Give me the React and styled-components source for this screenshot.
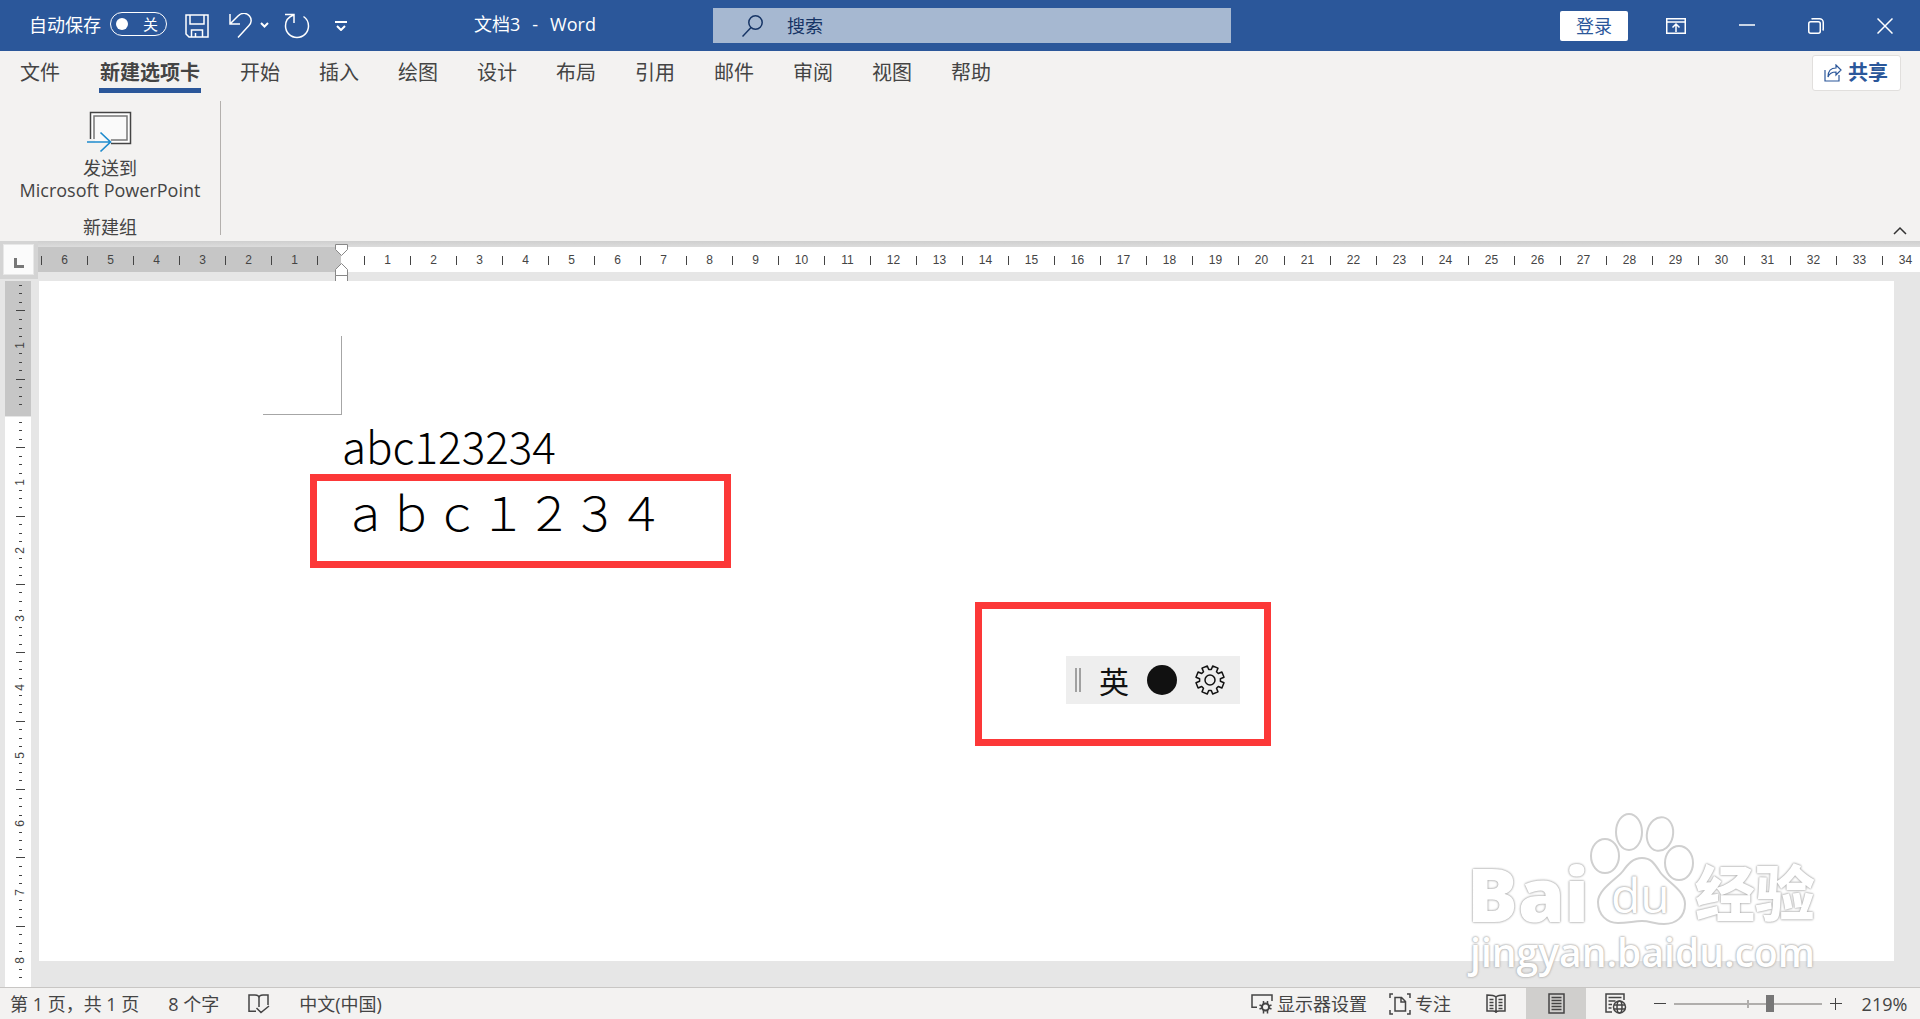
import React, { useState } from 'react';
import styled, { createGlobalStyle } from 'styled-components';

const tabs = ['文件', '新建选项卡', '开始', '插入', '绘图', '设计', '布局', '引用', '邮件', '审阅', '视图', '帮助'];
const marginMarks = [1, 2, 3, 4, 5, 6, 7];
const bodyMarks = Array.from({ length: 34 }, (_, i) => i + 1);
// eight slots make one ruler unit, the text area starts at slot 15
const slots = Array.from({ length: 82 }, (_, i) => i);

const slotLabel = (i) => {
  const n = Math.abs(i - 15) / 8;
  return Number.isInteger(n) && n > 0 ? n : null;
};

const App = () => {
  const [active, setActive] = useState('新建选项卡');
  const [autoSave, setAutoSave] = useState(false);
  const [zoom, setZoom] = useState(66);

  return (
    <Window>
      <GlobalStyle />
      <TitleBar>
        <QuickAccess>
          <AutoSave>
            <span id="autosave">自动保存</span>
            <Toggle role="switch" aria-checked={autoSave} aria-labelledby="autosave" onClick={() => setAutoSave(!autoSave)}>
              <Knob />
              {autoSave ? '开' : '关'}
            </Toggle>
          </AutoSave>
          <SaveButton aria-label="保存"><SaveIcon /></SaveButton>
          <UndoButton aria-label="撤消"><UndoIcon /></UndoButton>
          <RedoButton aria-label="重复"><RedoIcon /></RedoButton>
          <IconButton aria-label="自定义快速访问工具栏"><CustomizeIcon /></IconButton>
        </QuickAccess>
        <Title><span>文档3</span><span>-</span><span>Word</span></Title>
        <Search>
          <SearchIcon />
          <SearchInput type="search" aria-label="搜索" placeholder="搜索" />
        </Search>
        <WindowControls>
          <SignIn>登录</SignIn>
          <IconButton aria-label="功能区显示选项"><RibbonIcon /></IconButton>
          <IconButton aria-label="最小化"><MinimizeIcon /></IconButton>
          <IconButton aria-label="还原"><RestoreIcon /></IconButton>
          <IconButton aria-label="关闭"><CloseIcon /></IconButton>
        </WindowControls>
      </TitleBar>

      <TabBar>
        <Tabs>
          {tabs.map((tab) => (
            <Tab key={tab} $active={tab === active} onClick={() => setActive(tab)}>{tab}</Tab>
          ))}
        </Tabs>
        <Share><ShareIcon />共享</Share>
      </TabBar>

      <Ribbon>
        <Group>
          <SendButton>
            <SendIcon />
            <span>发送到</span>
            <span>Microsoft PowerPoint</span>
          </SendButton>
          <GroupName>新建组</GroupName>
        </Group>
        <Collapse aria-label="折叠功能区"><CollapseIcon /></Collapse>
      </Ribbon>

      <Workspace>
        <CornerCell>
          <TabStop aria-label="左对齐式制表符"><TabStopMark /></TabStop>
        </CornerCell>
        <Ruler>
          <MarginScale>
            {marginMarks.map((n) => <MarginUnit key={n}>{n < 7 && n}</MarginUnit>)}
          </MarginScale>
          <IndentIcon />
          <BodyScale>
            {bodyMarks.map((n) => <BodyUnit key={n}>{n}</BodyUnit>)}
          </BodyScale>
        </Ruler>
        <SideRuler>
          {slots.map((i) => (
            <Slot key={i}>
              {slotLabel(i) && <SlotLabel>{slotLabel(i)}</SlotLabel>}
              {!slotLabel(i) && i !== 15 && <Dash $long={i % 8 === 3} />}
            </Slot>
          ))}
        </SideRuler>
        <Page>
          <CropMark />
          <HalfWidth>abc123234</HalfWidth>
          <FullWidth>ａｂｃ１２３４</FullWidth>
          <TextFrame />
          <ImeFrame>
            <ImeBar>
              <Grip />
              <ImeMode>英</ImeMode>
              <ImeShape aria-label="全角" />
              <ImeButton aria-label="设置"><GearIcon /></ImeButton>
            </ImeBar>
          </ImeFrame>
        </Page>
        <Watermark>
          <Brand>
            <BrandLatin>Bai</BrandLatin>
            <Paw><PawIcon /><PawText>du</PawText></Paw>
            <BrandHan>经验</BrandHan>
          </Brand>
          <Site>jingyan.baidu.com</Site>
        </Watermark>
      </Workspace>

      <StatusBar>
        <StatusGroup>
          <StatusButton>第 1 页，共 1 页</StatusButton>
          <StatusButton>8 个字</StatusButton>
          <StatusButton aria-label="校对"><ProofIcon /></StatusButton>
          <StatusButton>中文(中国)</StatusButton>
        </StatusGroup>
        <ViewGroup>
          <ViewLabel><DisplayIcon />显示器设置</ViewLabel>
          <ViewLabel><FocusIcon />专注</ViewLabel>
          <ViewButton aria-label="阅读视图"><ReadIcon /></ViewButton>
          <ViewButton aria-label="页面视图" $active><PrintIcon /></ViewButton>
          <ViewButton aria-label="Web 版式视图"><WebIcon /></ViewButton>
          <ZoomButton aria-label="缩小"><MinusIcon /></ZoomButton>
          <ZoomRange type="range" aria-label="缩放" value={zoom} onChange={(e) => setZoom(Number(e.target.value))} />
          <ZoomButton aria-label="放大"><PlusIcon /></ZoomButton>
          <ZoomValue>219%</ZoomValue>
        </ViewGroup>
      </StatusBar>
    </Window>
  );
};

/* icons */

const SaveIcon = () => (
  <svg width="24" height="24" viewBox="0 0 24 24" fill="none" stroke="#fff" strokeWidth="1.5">
    <path d="M1 1h22v22H4l-3-3zM5 1v9h14V1M6.500 23v-7h11v7M10.500 19v4" />
  </svg>
);

const UndoIcon = () => (
  <svg width="40" height="26" viewBox="0 0 40 26" fill="none" stroke="#fff" strokeWidth="1.500">
    <path d="M1 1v10h10M1.500 10.500L9 3c4-4 9-3 11.500 0s2 7-.5 9.500L9 24.500" />
    <path d="M32 10l3.500 3.500L39 10" strokeWidth="2" />
  </svg>
);

const RedoIcon = () => (
  <svg width="26" height="26" viewBox="0 0 26 26" fill="none" stroke="#fff" strokeWidth="1.500">
    <path d="M1 1.500h9V10M9.500 2C4 4 1.500 8.500 1.500 13a11.500 11.500 0 0 0 23 0c0-4-2-7.500-5-9.500" />
  </svg>
);

const CustomizeIcon = () => (
  <svg width="12" height="10" viewBox="0 0 12 10" fill="none" stroke="#fff" strokeWidth="2">
    <path d="M0 1h12M2 5l4 4 4-4" />
  </svg>
);

const SearchIcon = () => (
  <svg width="21" height="22" viewBox="0 0 21 22" fill="none" stroke="#163465" strokeWidth="1.500">
    <circle cx="13.500" cy="7.500" r="6.700" /><path d="M9 12.500L.5 21.500" />
  </svg>
);

const RibbonIcon = () => (
  <svg width="20" height="16" viewBox="0 0 20 16" fill="none" stroke="#fff" strokeWidth="1.500">
    <path d="M.75.75h18.500v14.500H.75zM1 4h18M10 14V6.500M6.500 9.500L10 6l3.500 3.500" />
  </svg>
);

const MinimizeIcon = () => (
  <svg width="16" height="16" viewBox="0 0 16 16" stroke="#fff" strokeWidth="1.500"><path d="M0 7h16" /></svg>
);

const RestoreIcon = () => (
  <svg width="16" height="16" viewBox="0 0 16 16" fill="none" stroke="#fff" strokeWidth="1.500">
    <rect x=".75" y="3.750" width="11.500" height="11.500" rx="2" />
    <path d="M3.500 1C4 .75 4.500.75 5 .75h6.500c2 0 3.750 1.500 3.750 3.750V11c0 .5 0 1-.5 1.500" />
  </svg>
);

const CloseIcon = () => (
  <svg width="16" height="16" viewBox="0 0 16 16" stroke="#fff" strokeWidth="1.500"><path d="M.5.500l15 15M15.500.500l-15 15" /></svg>
);

const ShareIcon = () => (
  <svg width="18" height="18" viewBox="0 0 18 18" fill="none" stroke="#2b579a" strokeWidth="1.200">
    <path d="M1 6v11h14v-6" />
    <path d="M4 13c0-6 3-9 8-9V1l5 5-5 5V8c-4 0-6.500 1-8 5z" />
  </svg>
);

const SendIcon = () => (
  <svg width="46" height="42" viewBox="0 0 46 42" fill="none">
    <path d="M3.500 1.500h40v31h-40z" fill="#fff" stroke="#444" strokeWidth="1.500" />
    <path d="M7 5h33v24H7z" fill="#fafafa" stroke="#777" strokeWidth="1.500" />
    <path d="M0 28h24v6H0z" fill="#f3f2f1" />
    <path d="M8 28h15v4H8z" fill="#fafafa" />
    <path d="M0 31h23M13.500 21.500l10 9.500-10 9.500" stroke="#1e8bcd" strokeWidth="1.700" />
  </svg>
);

const CollapseIcon = () => (
  <svg width="14" height="9" viewBox="0 0 14 9" fill="none" stroke="#333" strokeWidth="1.500"><path d="M1 8l6-6 6 6" /></svg>
);

const TabStopMark = () => (
  <svg width="10" height="10" viewBox="0 0 10 10" fill="none" stroke="#777" strokeWidth="3"><path d="M1.500 0v8.500H10" /></svg>
);

const IndentIcon = () => (
  <svg width="13" height="38" viewBox="0 0 13 38" fill="#fff" stroke="#888">
    <path d="M.5.500h12v5l-6 6-6-6zM.5 31.500v-6l6-6 6 6v6zM.5 31.500h12v6H.5z" />
  </svg>
);

const GearIcon = () => {
  const teeth = Array.from({ length: 8 }, (_, i) => {
    const a = (i * Math.PI) / 4 + Math.PI / 8;
    return [[-0.27, 10.500], [-0.2, 14.300], [0.2, 14.300], [0.27, 10.500]].map(([d, r]) => (
      `${(15 + r * Math.cos(a + d)).toFixed(1)},${(15 + r * Math.sin(a + d)).toFixed(1)}`
    )).join(' ');
  });
  return (
    <svg width="30" height="30" viewBox="0 0 30 30" fill="none" stroke="#111" strokeWidth="1.500" strokeLinejoin="round">
      <polygon points={teeth.join(' ')} /><circle cx="15" cy="15" r="5" />
    </svg>
  );
};

const PawIcon = () => (
  <svg width="106" height="114" viewBox="0 0 106 114" fill="#fff" stroke="#d0d0d0" strokeWidth="2">
    <ellipse cx="16" cy="45" rx="14" ry="17" />
    <ellipse cx="40" cy="21" rx="13" ry="18" />
    <ellipse cx="71" cy="23" rx="13" ry="17" transform="rotate(12 71 23)" />
    <ellipse cx="90" cy="52" rx="14" ry="17" />
    <path d="M53 47c-9 0-14 6-19 13S9 78 9 91c0 13 9 21 20 21 10 0 16-2 24-2s13 3 22 3c12 0 21-7 21-20 0-14-19-23-25-32S62 47 53 47z" />
  </svg>
);

const ProofIcon = () => (
  <svg width="22" height="20" viewBox="0 0 22 20" fill="none" stroke="#444" strokeWidth="1.500">
    <path d="M8 17.250H1V1h6c2 0 4 1 4 3 0-2 2-3 4-3h5v10M11 4v9M8.500 14l4.500 4.500L21 12" />
  </svg>
);

const DisplayIcon = () => (
  <svg width="22" height="20" viewBox="0 0 22 20" fill="none" stroke="#444" strokeWidth="1.500">
    <path d="M6 13.250H1V1h20v6" />
    <circle cx="14.500" cy="13" r="3.500" strokeWidth="2" />
    <path d="M12.500 7v3M16.500 7v3M12.500 16v3.500M16.500 16v3.500M8.500 11l2.500 1M18 14l2.500 1M8.500 15l2.500-1M18 12l2.500-1" />
  </svg>
);

const FocusIcon = () => (
  <svg width="22" height="22" viewBox="0 0 22 22" fill="none" stroke="#444" strokeWidth="1.500">
    <path d="M4 1H1v4M18 1h3v4M4 21H1v-4M18 21h3v-4M6 4.500h6.500l4 4V18H6zM12 4.500V9h4.500" />
  </svg>
);

const ReadIcon = () => (
  <svg width="20" height="20" viewBox="0 0 20 20" fill="none" stroke="#444" strokeWidth="1.500">
    <path d="M10 3C8 1 5 1 1 1v16h6c2 0 3 1 3 1s1-1 3-1h6V1c-4 0-7 0-9 2zM10 3v16M3.500 5.500h4M3.500 8.500h4M3.500 11.500h4M3.500 14.500h4M12.500 5.500h4M12.500 8.500h4M12.500 11.500h4M12.500 14.500h4" />
  </svg>
);

const PrintIcon = () => (
  <svg width="17" height="21" viewBox="0 0 17 21" fill="none" stroke="#444" strokeWidth="1.500">
    <path d="M1 1h15v19H1zM3.500 4.500h10M3.500 7.500h10M3.500 10.500h10M3.500 13.500h10M3.500 16.500h10" />
  </svg>
);

const WebIcon = () => (
  <svg width="22" height="21" viewBox="0 0 22 21" fill="none" stroke="#444" strokeWidth="1.500">
    <path d="M7 19H1V1h18v6M3.500 4.500h13M3.500 8h7M3.500 11.500h3.500M3.500 15h3" />
    <circle cx="14.500" cy="14" r="6" /><ellipse cx="14.500" cy="14" rx="2.500" ry="6" />
    <path d="M9 12h11M9 16h11" />
  </svg>
);

const MinusIcon = () => (
  <svg width="12" height="12" viewBox="0 0 12 12" stroke="#444"><path d="M0 5.500h12" /></svg>
);

const PlusIcon = () => (
  <svg width="12" height="12" viewBox="0 0 12 12" stroke="#444"><path d="M0 5.500h12M5.500 0v12" /></svg>
);

/* layout */

const GlobalStyle = createGlobalStyle`
  * {
    box-sizing: border-box;
  }
  body {
    margin: 0;
    color: #444;
    font-family: 'Open Sans', 'Noto Sans CJK SC', sans-serif;
    font-size: 18px;
  }
  button, input {
    margin: 0;
    padding: 0;
    border: 0;
    background: none;
    color: inherit;
    font: inherit;
  }
  svg {
    display: block;
    flex: none;
  }
`;

const Window = styled.div`
  display: flex;
  flex-direction: column;
  height: 100vh;
  overflow: hidden;
  background: #f3f2f1;
`;

const TitleBar = styled.header`
  display: grid;
  grid-template-columns: 474fr 239fr 518fr 689fr;
  align-items: center;
  height: 51px;
  flex: none;
  color: #fff;
  background: #2b579a;
`;

const QuickAccess = styled.div`
  display: flex;
  align-items: center;
  padding-left: 29px;
  white-space: nowrap;
`;

const AutoSave = styled.div`
  display: flex;
  align-items: center;
  gap: 9px;
  padding-bottom: 3px;
`;

const Toggle = styled.button`
  display: flex;
  align-items: center;
  justify-content: space-between;
  width: 57px;
  height: 24px;
  padding: 0 8px 0 5px;
  border: 1px solid #fff;
  border-radius: 12px;
  font-size: 15px;
  line-height: 20px;
`;

const Knob = styled.span`
  width: 12px;
  height: 12px;
  border-radius: 50%;
  background: #fff;
`;

const IconButton = styled.button`
  display: flex;
  align-items: center;
  justify-content: center;
`;

const SaveButton = styled(IconButton)`
  margin-left: 18px;
`;

const UndoButton = styled(IconButton)`
  margin-left: 20px;
`;

const RedoButton = styled(IconButton)`
  margin: 0 25px 0 15px;
`;

const Title = styled.div`
  display: flex;
  gap: 12px;
  padding-bottom: 4px;
  line-height: 24px;
`;

const Search = styled.label`
  display: flex;
  align-items: center;
  gap: 24px;
  height: 35px;
  padding: 0 29px;
  color: #163465;
  background: #a6b8d1;
`;

const SearchInput = styled.input`
  flex: 1;
  min-width: 0;
  outline: none;
  &::placeholder {
    color: #163465;
    opacity: 1;
  }
`;

const WindowControls = styled.div`
  display: flex;
  align-items: center;
  justify-content: flex-end;
  gap: 53px;
  padding-right: 27px;
`;

const SignIn = styled.button`
  width: 68px;
  height: 30px;
  margin-right: -15px;
  border-radius: 2px;
  color: #2b579a;
  background: #fff;
  line-height: 30px;
`;

const TabBar = styled.nav`
  display: flex;
  justify-content: space-between;
  height: 42px;
  flex: none;
  padding: 0 19px 0 20px;
  font-size: 20px;
`;

const Tabs = styled.div`
  display: flex;
  gap: 39px;
`;

const Tab = styled.button`
  height: 42px;
  padding: ${({ $active }) => ($active ? '7px 1px 0' : '7px 0 0')};
  border-bottom: 5px solid ${({ $active }) => ($active ? '#2b579a' : 'transparent')};
  font-weight: ${({ $active }) => ($active ? 700 : 400)};
  line-height: 30px;
  white-space: nowrap;
`;

const Share = styled.button`
  display: flex;
  align-items: center;
  gap: 6px;
  height: 36px;
  margin-top: 4px;
  padding: 0 12px 0 11px;
  border: 1px solid #e1dfdd;
  border-radius: 3px;
  color: #2b579a;
  background: #fff;
  font-weight: 700;
  line-height: 30px;
`;

const Ribbon = styled.section`
  display: flex;
  align-items: flex-end;
  justify-content: space-between;
  height: 148px;
  flex: none;
  padding: 8px 13px 6px 0;
`;

const Group = styled.div`
  display: flex;
  flex-direction: column;
  align-items: center;
  justify-content: space-between;
  width: 221px;
  height: 134px;
  padding-top: 10px;
  border-right: 1px solid #b3b0ad;
`;

const SendButton = styled.button`
  display: flex;
  flex-direction: column;
  align-items: center;
  line-height: 22px;
  svg {
    margin-bottom: 4px;
  }
`;

const GroupName = styled.div`
  line-height: 16px;
`;

const Collapse = styled(IconButton)`
  height: 9px;
`;

const Workspace = styled.main`
  position: relative;
  display: grid;
  grid-template-columns: 38px minmax(0, 1fr);
  grid-template-rows: 40px minmax(0, 1fr);
  flex: 1;
  min-height: 0;
  background: linear-gradient(#cfcfcf, #dcdcdc 6px, #e6e6e6 6px);
`;

const CornerCell = styled.div`
  height: 38px;
  padding: 3px;
  background: #d4d4d4;
`;

const TabStop = styled.button`
  display: flex;
  align-items: flex-end;
  justify-content: center;
  width: 31px;
  height: 31px;
  padding: 0 0 6px;
  border: 1px solid #e8e8e8;
  background: #fbfbfb;
`;

const Ruler = styled.div`
  position: relative;
  display: flex;
  height: 25px;
  margin-top: 6px;
  font-family: 'Liberation Sans', Arial, sans-serif;
  font-size: 12px;
  line-height: 9px;
  svg {
    position: absolute;
    left: 297px;
    top: -3px;
  }
`;

const MarginScale = styled.div`
  display: flex;
  flex-direction: row-reverse;
  align-items: center;
  width: 303px;
  padding: 2px 23px 0 0;
  overflow: hidden;
  background: #c6c6c6;
`;

const BodyScale = styled.div`
  display: flex;
  align-items: center;
  flex: 1;
  padding: 2px 0 0 23px;
  overflow: hidden;
  background: #fff;
`;

const MarginUnit = styled.span`
  width: 46px;
  height: 9px;
  flex: none;
  border-right: 1px solid #444;
  text-align: center;
`;

const BodyUnit = styled(MarginUnit)`
  border-right: 0;
  border-left: 1px solid #444;
`;

const SideRuler = styled.div`
  width: 26px;
  min-height: 0;
  margin-left: 5px;
  padding-left: 4px;
  background: linear-gradient(#c6c6c6 135px, #e6e6e6 135px, #e6e6e6 136px, #fff 136px);
`;

const Slot = styled.div`
  display: flex;
  align-items: center;
  justify-content: center;
  height: calc(100% / 82.5);
`;

const Dash = styled.span`
  width: ${({ $long }) => ($long ? 9 : 3)}px;
  height: 1px;
  background: #444;
`;

const SlotLabel = styled.span`
  writing-mode: vertical-rl;
  transform: rotate(180deg);
  font-family: 'Liberation Sans', Arial, sans-serif;
  font-size: 12px;
  line-height: 12px;
`;

const Page = styled.article`
  position: relative;
  margin: 0 26px 26px 1px;
  padding: 55px 0 0 224px;
  color: #000;
  background: #fff;
  font-family: 'Noto Sans CJK SC', sans-serif;
  font-weight: 300;
`;

const CropMark = styled.div`
  width: 79px;
  height: 79px;
  border: solid #a6a6a6;
  border-width: 0 1px 1px 0;
`;

const HalfWidth = styled.p`
  margin: 0 0 0 79px;
  font-size: 44px;
  line-height: 60px;
`;

const FullWidth = styled(HalfWidth)`
  font-size: 46px;
  line-height: 72px;
`;

const TextFrame = styled.div`
  position: absolute;
  left: 271px;
  top: 193px;
  width: 421px;
  height: 94px;
  border: 7px solid #fc3838;
`;

const ImeFrame = styled.div`
  position: absolute;
  left: 936px;
  top: 321px;
  width: 296px;
  height: 144px;
  padding: 47px 24px 0 84px;
  border: 7px solid #fc3838;
`;

const ImeBar = styled.div`
  display: flex;
  align-items: center;
  gap: 18px;
  height: 48px;
  padding: 0 9px;
  color: #111;
  background: #eee;
`;

const Grip = styled.span`
  width: 6px;
  height: 24px;
  border: solid #a0a0a0;
  border-width: 0 2px;
`;

const ImeButton = styled(IconButton)`
  width: 30px;
  height: 30px;
`;

const ImeMode = styled(ImeButton)`
  font-size: 30px;
  font-weight: 400;
  line-height: 30px;
`;

const ImeShape = styled(ImeButton)`
  border-radius: 50%;
  background: #111;
`;

const Watermark = styled.div`
  position: absolute;
  right: 105px;
  bottom: 8px;
  color: #fff;
  text-align: right;
  text-shadow: 0 0 2px #aaa, 0 0 2px #bbb, 0 0 3px #ccc;
`;

const Brand = styled.div`
  display: flex;
  align-items: flex-end;
  justify-content: flex-end;
  font-weight: 800;
`;

const BrandLatin = styled.span`
  font-size: 75px;
  line-height: 64px;
`;

const Paw = styled.span`
  position: relative;
`;

const PawText = styled.span`
  position: absolute;
  left: 22px;
  bottom: 0;
  font-size: 48px;
  font-weight: 400;
  line-height: 60px;
`;

const BrandHan = styled.span`
  font-family: 'Noto Sans CJK SC', sans-serif;
  font-size: 60px;
  font-weight: 900;
  line-height: 70px;
`;

const Site = styled.div`
  font-size: 39px;
  font-weight: 600;
  line-height: 54px;
`;

const StatusBar = styled.footer`
  display: flex;
  justify-content: space-between;
  height: 32px;
  flex: none;
  border-top: 1px solid #c8c6c4;
  line-height: 30px;
  white-space: nowrap;
`;

const StatusGroup = styled.div`
  display: flex;
  align-items: center;
  gap: 29px;
  padding-left: 10px;
`;

const StatusButton = styled(IconButton)``;

const ViewGroup = styled(StatusGroup)`
  gap: 0;
  padding: 0 11px 0 0;
`;

const ViewLabel = styled(IconButton)`
  gap: 4px;
  margin-right: 22px;
`;

const ViewButton = styled(IconButton)`
  width: 60px;
  height: 31px;
  background: ${({ $active }) => ($active ? '#d0cfcd' : 'none')};
  ${ViewLabel} + & {
    margin-left: -7px;
  }
`;

const ZoomButton = styled(IconButton)`
  width: 28px;
  height: 31px;
`;

const ZoomRange = styled.input`
  width: 148px;
  height: 18px;
  appearance: none;
  background:
    linear-gradient(#b0aeac, #b0aeac) center / 100% 2px no-repeat,
    linear-gradient(#b0aeac, #b0aeac) center / 2px 8px no-repeat;
  &::-webkit-slider-thumb {
    appearance: none;
    width: 8px;
    height: 17px;
    background: #777;
  }
`;

const ZoomValue = styled(IconButton)`
  min-width: 49px;
  margin-left: 10px;
`;

export default App;
